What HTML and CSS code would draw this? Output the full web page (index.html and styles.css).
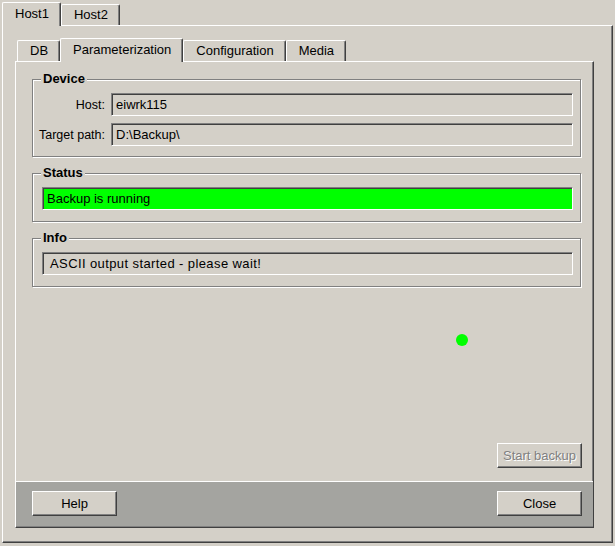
FILE: index.html
```html
<!DOCTYPE html>
<html lang="en">
<head>
    <meta charset="UTF-8">
    <title>Backup</title>
    <link rel="stylesheet" href="styles.css">
</head>
<body>
<div class="window">
    <div class="tabs">
        <div class="tab active">Host1</div>
        <div class="tab">Host2</div>
    </div>

    <div class="panel outer">
        <div class="tabs tabs-inner">
            <div class="tab">DB</div>
            <div class="tab active">Parameterization</div>
            <div class="tab">Configuration</div>
            <div class="tab">Media</div>
        </div>

        <div class="panel inner">
            <div class="content">
                <div class="group group-device">
                    <div class="group-title">Device</div>
                    <div class="form-grid">
                        <label>Host:</label>
                        <div class="field">eiwrk115</div>
                        <label>Target path:</label>
                        <div class="field">D:\Backup\</div>
                    </div>
                </div>

                <div class="group">
                    <div class="group-title">Status</div>
                    <div class="field field-status">Backup is running</div>
                </div>

                <div class="group">
                    <div class="group-title">Info</div>
                    <div class="field field-info">ASCII output started - please wait!</div>
                </div>

                <div class="canvas">
                    <span class="led"></span>
                </div>

                <div class="actions">
                    <button class="btn" disabled>Start backup</button>
                </div>
            </div>

            <div class="footer">
                <button class="btn">Help</button>
                <button class="btn">Close</button>
            </div>
        </div>
    </div>
</div>
</body>
</html>
```

FILE: styles.css
```css
body {
    margin: 0;
    background: #d4d0c8;
    font-family: "Liberation Sans", Arial, sans-serif;
    font-size: 13px;
    color: #000;
}

.window {
    width: 611px;
    padding: 2px 0 0 2px;
}

/* tabs */
.tabs {
    display: flex;
    align-items: flex-end;
}

.tabs-inner {
    padding-left: 2px;
}

.tab {
    height: 20px;
    line-height: 20px;
    padding: 0 11px 0 12px;
    border-top: 1px solid #fff;
    border-left: 1px solid #fff;
    border-right: 1px solid #404040;
    border-radius: 2px 2px 0 0;
    box-shadow: inset -1px 0 #808080;
    background: #d4d0c8;
    white-space: nowrap;
}

.tab.active {
    height: 23px;
    line-height: 22px;
    margin-bottom: -1px;
    position: relative;
    z-index: 1;
}

/* raised panels */
.panel {
    border-top: 1px solid #fff;
    border-left: 1px solid #fff;
    border-right: 1px solid #404040;
    border-bottom: 1px solid #404040;
    box-shadow: inset -1px -1px #808080;
}

.outer {
    padding: 12px 18px 14px 12px;
}

.inner {
    height: 467px;
    box-sizing: border-box;
    padding-bottom: 1px;
    display: flex;
    flex-direction: column;
}

.content {
    flex: 1;
    display: flex;
    flex-direction: column;
    padding: 17px 12px 13px 16px;
}

/* group boxes */
.group {
    position: relative;
    border: 1px solid #808080;
    box-shadow: inset 1px 1px #fff, 1px 1px #fff;
    padding: 13px 7px 11px 9px;
    margin-bottom: 16px;
}

.group-device {
    padding: 13px 7px 10px 6px;
}

.group-title {
    position: absolute;
    top: -8px;
    left: 8px;
    padding: 0 2px;
    line-height: 14px;
    font-weight: bold;
    background: #d4d0c8;
}

.form-grid {
    display: grid;
    grid-template-columns: auto 1fr;
    column-gap: 6px;
    row-gap: 7px;
    align-items: center;
}

.form-grid label {
    font-size: 12.5px;
    text-align: right;
}

.field {
    height: 23px;
    box-sizing: border-box;
    line-height: 21px;
    padding: 0 4px;
    border: 1px solid;
    border-color: #808080 #fff #fff #808080;
    box-shadow: inset 1px 1px #404040;
    white-space: nowrap;
}

.field-status {
    background: #00ff00;
}

.field-info {
    padding-left: 7px;
    letter-spacing: 0.4px;
}

/* free area with the state lamp */
.canvas {
    flex: 1;
    position: relative;
    margin-top: -16px;
}

.led {
    position: absolute;
    left: 424px;
    top: 47px;
    width: 12px;
    height: 12px;
    border-radius: 50%;
    background: #00ff00;
}

.actions {
    display: flex;
    justify-content: flex-end;
    margin-right: -1px;
}

/* buttons */
.btn {
    width: 85px;
    height: 25px;
    box-sizing: border-box;
    padding: 0;
    font: inherit;
    color: #000;
    background: #d4d0c8;
    border: 1px solid;
    border-color: #fff #404040 #404040 #fff;
    box-shadow: inset -1px -1px #808080;
}

.btn:disabled {
    color: #808080;
    text-shadow: 1px 1px #fff;
}

.footer {
    display: flex;
    justify-content: space-between;
    padding: 9px 11px 10px 16px;
    border-top: 1px solid #fff;
    background: #a4a4a0;
}
```
